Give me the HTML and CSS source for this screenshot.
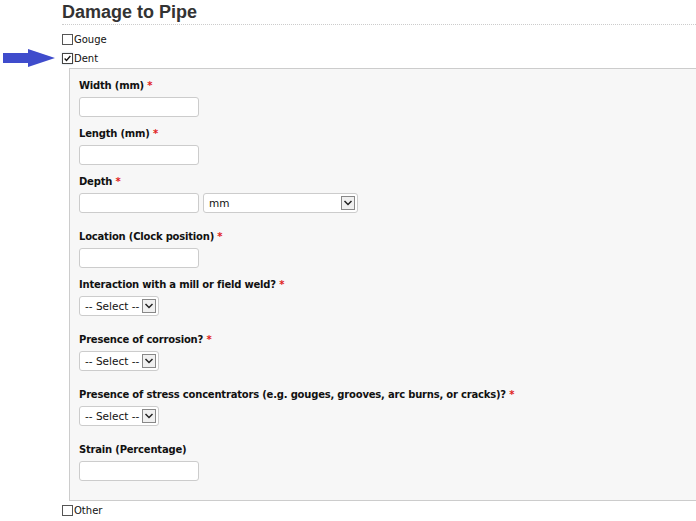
FILE: index.html
```html
<!DOCTYPE html>
<html>
<head>
<meta charset="utf-8">
<link rel="stylesheet" href="styles.css">
</head>
<body>
<div class="page">
  <h2 class="title">Damage to Pipe</h2>
  <div class="options">
    <label class="check"><span class="box"></span>Gouge</label>
    <label class="check pointed">
      <svg class="pointer" width="54" height="20" viewBox="0 0 54 20"><polygon points="0,4 25,4 25,0 52,9 25,18 25,14 0,14" fill="#3f4ccc"/></svg>
      <span class="box checked"><svg width="11" height="11" viewBox="0 0 11 11"><path d="M2 5.5 L4.3 8 L9 2.5" fill="none" stroke="#111" stroke-width="1.6"/></svg></span>Dent
    </label>
    <div class="panel">
      <div class="field">
        <div class="lbl">Width (mm) <span class="req">*</span></div>
        <div class="input"></div>
      </div>
      <div class="field">
        <div class="lbl">Length (mm) <span class="req">*</span></div>
        <div class="input"></div>
      </div>
      <div class="field sel">
        <div class="lbl">Depth <span class="req">*</span></div>
        <div class="row">
          <div class="input"></div>
          <div class="select wide"><span class="val">mm</span><span class="arrow"><svg width="12" height="12" viewBox="0 0 12 12"><path d="M2.5 4 L6 7.5 L9.5 4" fill="none" stroke="#222" stroke-width="1.5"/></svg></span></div>
        </div>
      </div>
      <div class="field">
        <div class="lbl">Location (Clock position) <span class="req">*</span></div>
        <div class="input"></div>
      </div>
      <div class="field sel">
        <div class="lbl">Interaction with a mill or field weld? <span class="req">*</span></div>
        <div class="select"><span class="val">-- Select --</span><span class="arrow"><svg width="12" height="12" viewBox="0 0 12 12"><path d="M2.5 4 L6 7.5 L9.5 4" fill="none" stroke="#222" stroke-width="1.5"/></svg></span></div>
      </div>
      <div class="field sel">
        <div class="lbl">Presence of corrosion? <span class="req">*</span></div>
        <div class="select"><span class="val">-- Select --</span><span class="arrow"><svg width="12" height="12" viewBox="0 0 12 12"><path d="M2.5 4 L6 7.5 L9.5 4" fill="none" stroke="#222" stroke-width="1.5"/></svg></span></div>
      </div>
      <div class="field sel">
        <div class="lbl">Presence of stress concentrators (e.g. gouges, grooves, arc burns, or cracks)? <span class="req">*</span></div>
        <div class="select"><span class="val">-- Select --</span><span class="arrow"><svg width="12" height="12" viewBox="0 0 12 12"><path d="M2.5 4 L6 7.5 L9.5 4" fill="none" stroke="#222" stroke-width="1.5"/></svg></span></div>
      </div>
      <div class="field">
        <div class="lbl">Strain (Percentage)</div>
        <div class="input"></div>
      </div>
    </div>
    <label class="check"><span class="box"></span>Other</label>
  </div>
</div>
</body>
</html>
```

FILE: styles.css
```css
html, body {
  margin: 0;
  padding: 0;
  background: #fff;
}
.page {
  padding-left: 62px;
  font-family: "DejaVu Sans", Verdana, sans-serif;
  font-size: 10px;
  color: #111;
}
.title {
  margin: 0;
  padding-top: 1px;
  height: 23px;
  font-family: "Liberation Sans", Arial, sans-serif;
  font-weight: bold;
  font-size: 18px;
  line-height: 22px;
  color: #333;
  border-bottom: 1px dotted #ccc;
}
.options {
  padding-top: 5px;
}
.check {
  display: flex;
  align-items: center;
  height: 19px;
  position: relative;
}
.box {
  width: 11px;
  height: 11px;
  box-sizing: border-box;
  border: 1px solid #555;
  background: #fff;
  margin-right: 1px;
  display: flex;
  align-items: center;
  justify-content: center;
}
.box.checked {
  border-color: #444;
  box-shadow: 0 0 2px #bcd;
}
.box svg { display: block; }
.pointer {
  position: absolute;
  left: -59px;
  top: 0px;
}
.panel {
  margin-left: 7px;
  background: #f7f7f7;
  border: 1px solid #ccc;
  border-right: none;
  padding: 8px 0 11px 9px;
}
.field {
  margin-bottom: 8px;
}
.field.sel {
  margin-bottom: 15px;
}
.lbl {
  font-weight: bold;
  line-height: 18px;
  height: 16px;
  margin-bottom: 4px;
  color: #111;
  letter-spacing: -0.2px;
}
.req {
  color: #e02020;
}
.input {
  width: 120px;
  height: 20px;
  box-sizing: border-box;
  border: 1px solid #ccc;
  border-radius: 3px;
  background: #fff;
}
.row {
  display: flex;
  gap: 4px;
}
.select {
  position: relative;
  width: 80px;
  height: 20px;
  box-sizing: border-box;
  border: 1px solid #ccc;
  border-radius: 3px;
  background: #fff;
  display: flex;
  align-items: center;
  padding-left: 5px;
  font-size: 10.5px;
  color: #111;
}
.select.wide {
  width: 155px;
}
.arrow {
  position: absolute;
  right: 2px;
  top: 2px;
  width: 14px;
  height: 14px;
  box-sizing: border-box;
  border: 1px solid #888;
  background: #f0f0f0;
  display: flex;
  align-items: center;
  justify-content: center;
}
.arrow svg { display: block; }
```
